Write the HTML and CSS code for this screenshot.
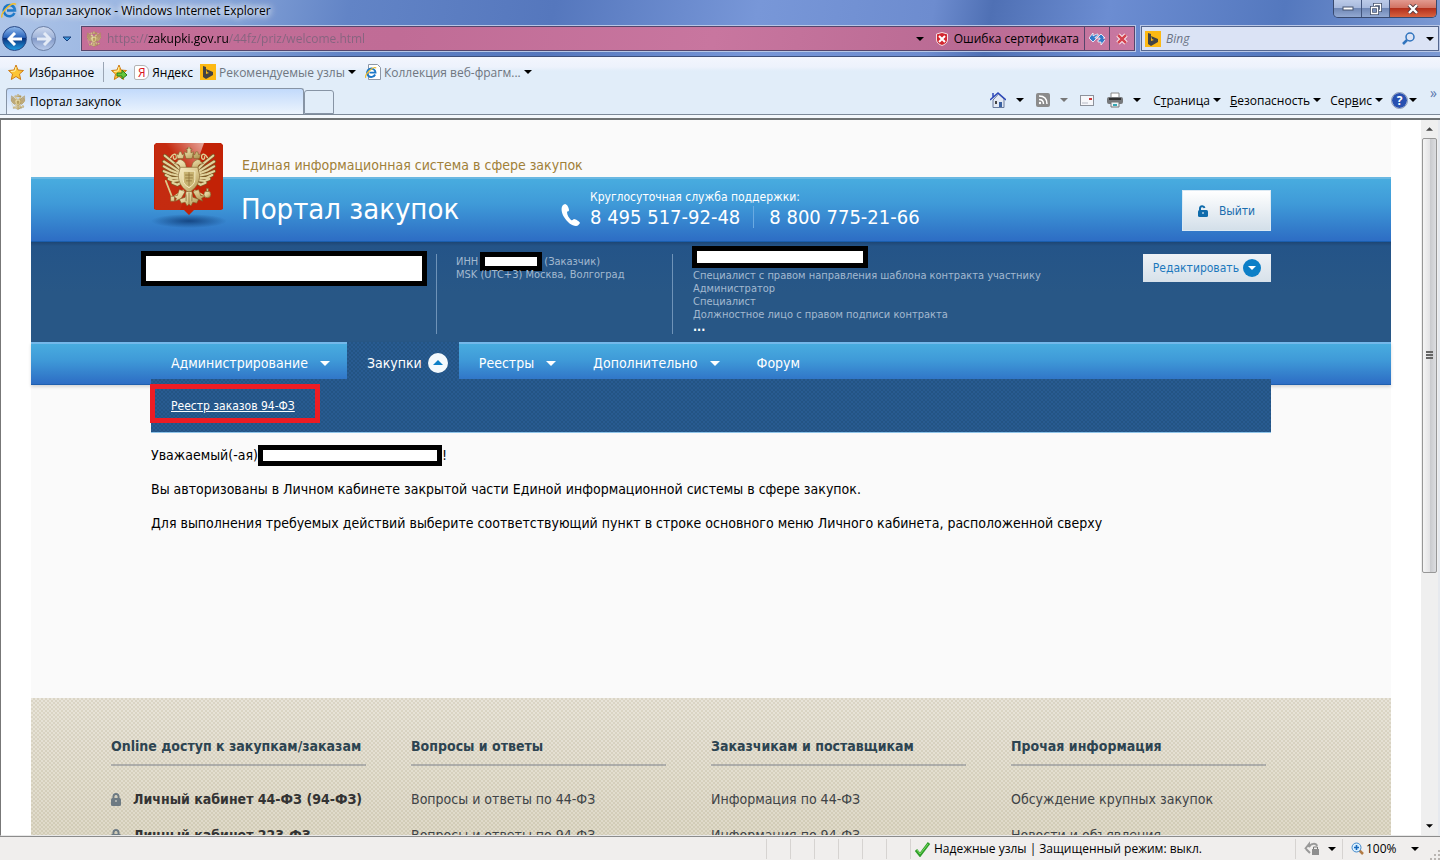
FILE: index.html
```html
<!DOCTYPE html>
<html lang="ru">
<head>
    <meta charset="UTF-8">
    <meta name="viewport" content="width=device-width, initial-scale=1.0">
    <title>Портал закупок</title>
    <link rel="stylesheet" href="styles.css">
</head>
<body>
    <!-- общие значки -->
    <svg class="defs" width="0" height="0" aria-hidden="true">
        <linearGradient id="gold" x1="0" y1="0" x2="1" y2="1">
            <stop offset="0" stop-color="#f6ecc4"/>
            <stop offset="0.5" stop-color="#dccb92"/>
            <stop offset="1" stop-color="#a98d48"/>
        </linearGradient>
        <symbol id="eagle" viewBox="0 0 54 62">
            <g fill="none" stroke-linecap="round">
                <path d="M19 24 12 17 2 9M18 26 9 20 1 15M18 28 8 24 1 20M18 30 8 28 1 25M18 32 9 32 3 29M19 34 11 35 6 33M20 36 15 39 10 37M35 24 42 17 52 9M36 26 45 20 53 15M36 28 46 24 53 20M36 30 46 28 53 25M36 32 45 32 51 29M35 34 43 35 48 33M34 36 39 39 44 37" stroke="#7d5c26" stroke-width="3.6"/>
                <path d="M19 24 12 17 2 9M18 26 9 20 1 15M18 28 8 24 1 20M18 30 8 28 1 25M18 32 9 32 3 29M19 34 11 35 6 33M20 36 15 39 10 37M35 24 42 17 52 9M36 26 45 20 53 15M36 28 46 24 53 20M36 30 46 28 53 25M36 32 45 32 51 29M35 34 43 35 48 33M34 36 39 39 44 37" stroke="#e2d29c" stroke-width="2.2"/>
                <path d="M8 11c2-4 6-5 6-1s-4 3-3 0M46 11c-2-4-6-5-6-1s4 3 3 0" stroke="#dfcd93" stroke-width="1.4"/>
                <path d="M3 35l7 18M12 51l9-6M33 45l9 5" stroke="#dcc98a" stroke-width="1.8"/>
            </g>
            <g fill="url(#gold)" stroke="#7d5c26" stroke-width="0.6">
                <path d="M24 25c1-6-1-11-6-12-2 0-3 1-3 2l-3 2 4 1c2 1 2 4 1 8zM30 25c-1-6 1-11 6-12 2 0 3 1 3 2l3 2-4 1c-2 1-2 4-1 8z"/>
                <path d="M18 21h18l2 8c0 8-4 14-11 18-7-4-11-10-11-18z"/>
                <path d="M23 9l-1-4 3 1V3h-1V2h2V0h2v2h2v1h-1v3l3-1-1 4-1 3h-6zM15 12l-1-5 2 1 1-3h2l1 3 2-1-1 5zM32 12l-1-5 2 1 1-3h2l1 3 2-1-1 5z"/>
                <path d="M24 46h6l1 6 6 2-2 4-4-1-2 4-2-2-2 2-2-4-4 1-2-4 6-2z"/>
                <path d="M17 44l-2 6-5 1 4 2-1 3 6-3 4-7zM37 44l2 6 5 1-4 2 1 3-6-3-4-7z"/>
                <circle cx="46" cy="49" r="3.5"/>
                <path d="M45 43h2v3h-2zM8 51h4v5H8z"/>
            </g>
            <path d="M21 25h12v9c0 4-3 6-6 8-3-2-6-4-6-8z" fill="#c8b372" stroke="#f6ebc2"/>
            <path d="M23 29h8M23 32h8M24 35h6M27 26v14M27 47v12M24 49v7M30 49v7" fill="none" stroke="#8c7138" stroke-width="0.8"/>
        </symbol>
        <symbol id="ie" viewBox="0 0 16 16">
            <path d="M13.5 10A5.6 5.6 0 1 1 14 7.500H6" fill="none" stroke="#1d78c8" stroke-width="2.600"/>
            <path d="M1 14.500C-.8 10 11-2 15 1.500" fill="none" stroke="#f0bd2c" stroke-width="1.500"/>
        </symbol>
        <symbol id="bing" viewBox="0 0 16 16">
            <path d="M0 0h16v16H0z" fill="#fdb913"/>
            <path d="M3 2l3 1v7l3-1-2-1-1-3 7 3v3l-7 4-3-2z" fill="#434343"/>
        </symbol>
        <symbol id="down" viewBox="0 0 8 4">
            <path d="M0 0h8L4 4z" fill="currentColor"/>
        </symbol>
        <symbol id="star" viewBox="0 0 16 16">
            <path d="M8 1l2 5 5.500.5-4 3.500 1.200 5.500L8 12.500 3.300 15.500 4.500 10 .5 6.500 6 6z" fill="#fcc534" stroke="#cf7d16"/>
            <path d="M8 3L7 7l-4 .5" fill="none" stroke="#fff0a8"/>
        </symbol>
        <symbol id="lock" viewBox="0 0 10 13">
            <path d="M2.500 6V3.500a2.500 2.500 0 0 1 5 0V6" fill="none" stroke="#6d7a83" stroke-width="2"/>
            <rect y="5" width="10" height="8" rx="1.500" fill="#6d7a83"/>
            <path d="M4 8h2" stroke="#e6e2d6"/>
        </symbol>
    </svg>

    <header class="browser">
        <div class="titlebar">
            <svg class="i16"><use href="#ie"/></svg>
            <span class="window-title">Портал закупок - Windows Internet Explorer</span>
            <div class="window-buttons">
                <button type="button" aria-label="Свернуть"><svg width="12" height="5"><rect x="1" y="1" width="10" height="3" fill="#fff" stroke="#45536e"/></svg></button>
                <button type="button" aria-label="Развернуть"><svg width="12" height="12" fill="none" stroke="#45536e" stroke-width="3"><path d="M4.500 3V1.500h6v6H9M1.500 4.500h6v6h-6z"/><path d="M4.500 3V1.500h6v6H9M1.500 4.500h6v6h-6z" stroke="#fff" stroke-width="1.300"/></svg></button>
                <button type="button" class="close" aria-label="Закрыть"><svg width="12" height="10"><path d="M2 1l8 8M10 1L2 9" stroke="#53383f" stroke-width="4"/><path d="M2 1l8 8M10 1L2 9" stroke="#fff" stroke-width="2.400"/></svg></button>
            </div>
        </div>

        <div class="address-row">
            <div class="history">
                <button type="button" class="round back" aria-label="Назад"><svg width="16" height="14"><path d="M15 7H3M8 1L2 7l6 6" fill="none" stroke="#fff" stroke-width="3"/></svg></button>
                <button type="button" class="round forward" aria-label="Вперед"><svg width="16" height="14"><path d="M1 7h12M8 1l6 6-6 6" fill="none" stroke="#e4ebf6" stroke-width="3"/></svg></button>
                <button type="button" class="recent" aria-label="Последние страницы"><svg width="10" height="6"><path d="M1 1h8L5 5z" fill="#3c97dc" stroke="#163f7d"/></svg></button>
            </div>
            <div class="address">
                <svg class="i16"><use href="#eagle"/></svg>
                <input class="url" type="text" aria-label="Адрес" value="https://zakupki.gov.ru/44fz/priz/welcome.html">
                <button type="button" class="address-drop" aria-label="Журнал"><svg class="arrow"><use href="#down"/></svg></button>
                <button type="button" class="cert"><svg width="12" height="14"><path d="M6 .5l5.500 1.500v6c0 3-3 4.500-5.500 5.500C3.500 12.500.5 11 .5 8V2z" fill="#d22630" stroke="#f4dfe2"/><path d="M3 4l6 6M9 4l-6 6" stroke="#fff" stroke-width="2"/></svg>Ошибка сертификата</button>
                <button type="button" class="address-button" aria-label="Обновить"><svg width="16" height="14" stroke="#fff" stroke-width=".8" fill="#3279c8"><path d="M0 6l4-5v3c3-2 5-2 5-2v2C7 4 6 5 6 6h2l-4 4zM16 8l-4 5v-3H9V8c2 0 2-1 2-2H8l4-4 4 4h-2"/></svg></button>
                <button type="button" class="address-button" aria-label="Остановить"><svg width="12" height="12"><path d="M2 2l8 8M10 2l-8 8" stroke="#fff" stroke-width="4.500"/><path d="M2 2l8 8M10 2l-8 8" stroke="#d4424f" stroke-width="2.500"/></svg></button>
            </div>
            <div class="search">
                <svg class="i16"><use href="#bing"/></svg>
                <input type="text" aria-label="Поиск" placeholder="Bing">
                <button type="button" aria-label="Найти"><svg width="13" height="13" fill="none" stroke="#2f73bd"><circle cx="8" cy="5" r="4" stroke-width="1.500"/><path d="M5 8l-4 4" stroke-width="2.500"/></svg></button>
                <button type="button" aria-label="Выбор поиска"><svg class="arrow"><use href="#down"/></svg></button>
            </div>
        </div>

        <div class="toolbars">
            <div class="favorites">
                <button type="button" class="fav-main"><svg class="i16"><use href="#star"/></svg>Избранное</button>
                <button type="button" class="fav-add" aria-label="Добавить"><svg class="i16"><use href="#star"/><path d="M6 9h5V6l5 5-5 4v-3H6z" fill="#66c63c" stroke="#2a7f1b"/></svg></button>
                <a class="fav" href="#"><span class="yandex">Я</span>Яндекс</a>
                <button type="button" class="fav dim"><svg class="i16"><use href="#bing"/></svg>Рекомендуемые узлы<svg class="arrow"><use href="#down"/></svg></button>
                <button type="button" class="fav dim"><svg class="i16"><path d="M3.500.5h9l3 3v12h-12z" fill="#fff" stroke="#8d97a6"/><use href="#ie" y="3" width="12" height="12"/></svg>Коллекция веб-фрагм...<svg class="arrow"><use href="#down"/></svg></button>
            </div>
            <div class="tab-row">
                <a class="tab" href="#"><svg class="i16"><use href="#eagle"/></svg>Портал закупок</a>
                <button type="button" class="new-tab" aria-label="Новая вкладка"></button>
                <div class="commands">
                    <button type="button" class="wide" aria-label="Домой"><svg class="i16"><path d="M3 8v7.500h11V7L8.500 2z" fill="#e3e9f3" stroke="#6a7b9d"/><path d="M0 8l8-7 8 7M3 5V1" fill="none" stroke="#2c47b8" stroke-width="1.500"/><path d="M9 10h3v5H9z" fill="#3c62a2"/><path d="M5 9h2v3H5z" fill="#444"/></svg><svg class="arrow"><use href="#down"/></svg></button>
                    <button type="button" class="wide grey" aria-label="Веб-каналы"><svg width="14" height="14"><rect width="14" height="14" rx="2" fill="#8b8b8b"/><path d="M3 3c5 0 8 3 8 8M3 6.500c3 0 4.500 2 4.500 4.500" fill="none" stroke="#fff" stroke-width="1.500"/><circle cx="4" cy="10" r="1.200" fill="#fff"/></svg><svg class="arrow"><use href="#down"/></svg></button>
                    <button type="button" aria-label="Почта"><svg width="14" height="11"><rect x=".5" y=".5" width="13" height="10" fill="#f6f7fa" stroke="#8d929b"/><path d="M9 3h3v2H9z" fill="#cb3a3a"/><path d="M2 8h6" stroke="#b5bac5"/></svg></button>
                    <button type="button" class="wide" aria-label="Печать"><svg class="i16"><path d="M4 1h8v6H4z" fill="#fff" stroke="#8a8a8a"/><rect y="5" width="16" height="7" rx="2" fill="#77797c"/><path d="M2 7h12" stroke="#333" stroke-width="2"/><path d="M4 10h8v5H4z" fill="#eef5f7" stroke="#777"/><path d="M6 13h4" stroke="#36a7b5" stroke-width="2"/></svg><svg class="arrow"><use href="#down"/></svg></button>
                    <button type="button" class="cmd"><span>С<u>т</u>раница</span><svg class="arrow"><use href="#down"/></svg></button>
                    <button type="button" class="cmd"><span><u>Б</u>езопасность</span><svg class="arrow"><use href="#down"/></svg></button>
                    <button type="button" class="cmd"><span>Сер<u>в</u>ис</span><svg class="arrow"><use href="#down"/></svg></button>
                    <button type="button" class="help"><span class="help-icon">?</span><svg class="arrow"><use href="#down"/></svg></button>
                    <button type="button" class="more">»</button>
                </div>
            </div>
        </div>
    </header>

    <div class="viewport">
        <main class="page">
            <div class="slogan">Единая информационная система в сфере закупок</div>
            <div class="band">
                <svg class="emblem" width="84" height="86" viewBox="0 0 84 86">
                    <defs>
                        <radialGradient id="shade"><stop offset="0" stop-color="#12407c" stop-opacity=".9"/><stop offset="1" stop-color="#12407c" stop-opacity="0"/></radialGradient>
                        <linearGradient id="shine" x1="1" y1="0" x2="0" y2="1"><stop offset="0" stop-color="#fff" stop-opacity=".6"/><stop offset=".4" stop-color="#fff" stop-opacity=".04"/></linearGradient>
                    </defs>
                    <ellipse cx="42" cy="78" rx="38" ry="7" fill="url(#shade)"/>
                    <path d="M9 0h65l2 2v64l-2 1H47l-5 5-5-5H9l-2-1V2z" fill="#c22206"/>
                    <path d="M8 0h49L33 67H8z" fill="url(#shine)"/>
                    <use href="#eagle" x="15" y="4" width="54" height="60"/>
                </svg>
                <h1>Портал закупок</h1>
                <svg class="phone-icon" width="20" height="23" viewBox="0 0 20 23"><path d="M2 1C0 3 0 8 3 13c3 5 8 9 12 9 2 0 3-2 4-3 0-1-4-4-6-4-1 0-1 2-3 1-2-2-4-5-4-8 0-1 2 0 2-2C8 4 6 0 4 0z" fill="#fff"/></svg>
                <div class="support">
                    <div class="support-title">Круглосуточная служба поддержки:</div>
                    <div class="phones"><span>8 495 517-92-48</span><span>8 800 775-21-66</span></div>
                </div>
                <button type="button" class="logout"><svg width="11" height="12"><path d="M2 6V3.500C2 .5 6 .5 6.500 3" fill="none" stroke="#0f6bab" stroke-width="2"/><rect y="5" width="10" height="7" rx="1.500" fill="#0f6bab"/><path d="M4 8h2" stroke="#fff"/></svg>Выйти</button>
            </div>

            <div class="info">
                <div class="info-org"><div class="redacted org-box"></div></div>
                <div class="info-inn">
                    <div class="inn">ИНН <span class="redacted inn-box"></span> (Заказчик)</div>
                    <div>MSK (UTC+3) Москва, Волгоград</div>
                </div>
                <div class="info-user">
                    <div class="redacted user-box"></div>
                    <div>Специалист с правом направления шаблона контракта участнику</div>
                    <div>Администратор</div>
                    <div>Специалист</div>
                    <div>Должностное лицо с правом подписи контракта</div>
                    <div class="dots">...</div>
                </div>
                <button type="button" class="edit">Редактировать<svg width="18" height="18"><circle cx="9" cy="9" r="9" fill="#0c7fc7"/><path d="M5 7h8l-4 4z" fill="#fff"/></svg></button>
            </div>

            <nav class="menu">
                <a href="#">Администрирование<svg class="menu-arrow"><use href="#down"/></svg></a>
                <a href="#" class="active">Закупки<svg width="20" height="20"><circle cx="10" cy="10" r="10" fill="#f3f9fd"/><path d="M5 12h10l-5-5z" fill="#0c7fc7"/></svg></a>
                <a href="#">Реестры<svg class="menu-arrow"><use href="#down"/></svg></a>
                <a href="#">Дополнительно<svg class="menu-arrow"><use href="#down"/></svg></a>
                <a href="#">Форум</a>
                <div class="submenu"><a href="#">Реестр заказов 94-ФЗ</a><div class="highlight"></div></div>
            </nav>

            <section class="welcome">
                <p>Уважаемый(-ая) <span class="redacted name-box"></span>!</p>
                <p>Вы авторизованы в Личном кабинете закрытой части Единой информационной системы в сфере закупок.</p>
                <p>Для выполнения требуемых действий выберите соответствующий пункт в строке основного меню Личного кабинета, расположенной сверху</p>
            </section>

            <footer class="footer">
                <div class="footer-col">
                    <h2>Online доступ к закупкам/заказам</h2>
                    <a href="#" class="cabinet"><svg width="10" height="13"><use href="#lock"/></svg>Личный кабинет 44-ФЗ (94-ФЗ)</a>
                    <a href="#" class="cabinet"><svg width="10" height="13"><use href="#lock"/></svg>Личный кабинет 223-ФЗ</a>
                </div>
                <div class="footer-col">
                    <h2>Вопросы и ответы</h2>
                    <a href="#">Вопросы и ответы по 44-ФЗ</a>
                    <a href="#">Вопросы и ответы по 94-ФЗ</a>
                </div>
                <div class="footer-col">
                    <h2>Заказчикам и поставщикам</h2>
                    <a href="#">Информация по 44-ФЗ</a>
                    <a href="#">Информация по 94-ФЗ</a>
                </div>
                <div class="footer-col">
                    <h2>Прочая информация</h2>
                    <a href="#">Обсуждение крупных закупок</a>
                    <a href="#">Новости и объявления</a>
                </div>
            </footer>
        </main>

        <div class="scrollbar">
            <svg class="scroll-arrow" viewBox="0 0 8 4"><path d="M0 4h8L4 0z" fill="#444"/></svg>
            <div class="thumb"><i></i><i></i><i></i></div>
            <svg class="scroll-arrow"><use href="#down"/></svg>
        </div>
    </div>

    <div class="statusbar">
        <i class="cell"></i><i class="cell"></i><i class="cell"></i><i class="cell"></i><i class="cell"></i><i class="cell"></i>
        <div class="zone"><svg width="16" height="16"><path d="M1 9l4 5L14 2" fill="none" stroke="#2f9e2b" stroke-width="3"/><path d="M2 9l3 4L13 3" fill="none" stroke="#7bdd60"/></svg>Надежные узлы | Защищенный режим: выкл.</div>
        <button type="button" class="privacy" aria-label="Конфиденциальность"><svg width="16" height="15"><path d="M1 8l4-5v3c2-4 7-4 8-1M2 8l4 4" fill="none" stroke="#999" stroke-width="2"/><rect x="8" y="8" width="7" height="6" fill="#8e8e8e"/><path d="M9.500 8V6h4v2" fill="none" stroke="#777"/></svg><svg class="arrow"><use href="#down"/></svg></button>
        <button type="button" class="zoom"><svg width="13" height="13"><path d="M8 8l4 4" stroke="#b27b45" stroke-width="2.500"/><circle cx="5.500" cy="5.500" r="4.500" fill="#d9efff" stroke="#4489ca"/><path d="M5.500 3v5M3 5.500h5" stroke="#1668bd" stroke-width="1.600"/></svg>100%<svg class="arrow"><use href="#down"/></svg></button>
        <svg class="grip" width="10" height="10"><path d="M8 0h2v2H8zM8 4h2v2H8zM4 4h2v2H4zM8 8h2v2H8zM4 8h2v2H4zM0 8h2v2H0z" fill="#b9b5b2"/></svg>
    </div>
</body>
</html>
```
FILE: styles.css
```css
* {
    box-sizing: border-box;
}

body {
    margin: 0;
    height: 100vh;
    display: flex;
    flex-direction: column;
    overflow: hidden;
    background: #fff;
    color: #000;
    font-family: "Open Sans", "Noto Sans", sans-serif;
    font-size: 12px;
}

button {
    display: flex;
    align-items: center;
    padding: 0;
    border: 0;
    background: none;
    color: inherit;
    font: inherit;
    white-space: nowrap;
}

input {
    min-width: 0;
    padding: 0;
    border: 0;
    outline: 0;
    background: none;
    font: inherit;
}

a {
    color: inherit;
    text-decoration: none;
}

svg {
    flex: none;
}

.defs {
    position: absolute;
}

.i16 {
    width: 16px;
    height: 16px;
}

.arrow {
    width: 8px;
    height: 4px;
}

/* окно браузера */
.browser {
    flex: none;
    background: linear-gradient(100deg, #aec5e8 0, #93b0df 12%, #6284c6 24%, #5577bd 38%, #7897d8 52%, #6d8ccf 64%, #4f70b4 68%, #6c8dd2 76%, #5478be 88%, #7f9cd5 100%);
}

.titlebar {
    display: flex;
    align-items: flex-start;
    gap: 3px;
    height: 26px;
    padding: 0 3px 0 1px;
}

.titlebar > .i16 {
    margin-top: 3px;
}

.window-title {
    padding: 2px 6px 2px 0;
    line-height: 18px;
    text-shadow: 0 0 6px #fff, 0 0 8px #fff, 0 0 10px #fff;
}

.window-buttons {
    display: flex;
    margin-left: auto;
    height: 18px;
    border: 1px solid #38496e;
    border-top: 0;
    border-radius: 0 0 5px 5px;
    overflow: hidden;
}

.window-buttons button {
    width: 28px;
    justify-content: center;
    border-right: 1px solid #42557d;
    background: linear-gradient(#bccbe8, #a7b9dd 45%, #7088b6 50%, #93a9d2);
}

.window-buttons .close {
    width: 46px;
    border-right: 0;
    background: linear-gradient(#e29a90, #d27364 45%, #b4301c 50%, #d8623f);
}

.address-row {
    display: flex;
    height: 30px;
    padding: 0 1px 5px 2px;
}

.history {
    display: flex;
    align-items: center;
    gap: 4px;
    width: 79px;
}

.round {
    flex: none;
    justify-content: center;
    width: 25px;
    height: 25px;
    border: 1px solid #274886;
    border-radius: 50%;
    background: linear-gradient(#8eb7ea, #2b66bd 45%, #0a337f 50%, #1f9be0);
}

.forward {
    border-color: #6b7fa5;
    background: linear-gradient(#cdd9ee, #a1b5da 45%, #8299c8 50%, #b9cbea);
}

.recent {
    margin-left: 2px;
}

.address {
    flex: 1;
    display: flex;
    align-items: center;
    gap: 5px;
    margin-right: 6px;
    padding-left: 4px;
    border: 1px solid #55466b;
    outline: 1px solid #b9c7e6;
    background: linear-gradient(100deg, #c56e98, #c06c96 30%, #c8769f 60%, #b96a93 84%, #c979a2);
}

/* домен в адресе темнее остальной строки */
.url {
    flex: 1;
    color: transparent;
    background: linear-gradient(90deg, #85647f 41px, #000 41px, #000 121px, #85647f 121px);
    -webkit-background-clip: text;
    background-clip: text;
}

.address-drop {
    margin-right: 7px;
}

.cert {
    gap: 6px;
}

.address-button {
    align-self: stretch;
    justify-content: center;
    width: 25px;
    margin-right: -5px;
    border-left: 1px solid #55466b;
}

.address-button:last-child {
    margin-right: 0;
}

.search {
    display: flex;
    align-items: center;
    gap: 5px;
    width: 298px;
    padding: 0 4px 0 3px;
    border: 1px solid #55678f;
    outline: 1px solid #b9c7e6;
    background: #dbe3f5;
}

.search input {
    flex: 1;
    font-style: italic;
}

.search input::placeholder {
    color: #6b7385;
    opacity: 1;
}

.search button + button {
    margin-left: 6px;
}

.toolbars {
    border-top: 1px solid #3c4f7c;
    border-bottom: 2px solid #6f7375;
    background: linear-gradient(#f3f6fd, #edf2fc 10px, #e1edf9 14px);
}

.favorites {
    display: flex;
    align-items: center;
    height: 30px;
    padding-left: 8px;
}

.fav-main {
    gap: 5px;
    height: 20px;
    padding-right: 9px;
    border-right: 1px solid #9aa5b4;
}

.fav-add {
    margin: 0 7px;
}

.fav {
    display: flex;
    align-items: center;
    gap: 3px;
    margin-right: 7px;
}

.fav .arrow,
.cmd .arrow {
    color: #000;
}

.dim {
    margin-right: 9px;
    color: #6f7680;
}

.yandex {
    width: 15px;
    height: 15px;
    border: 1px solid #b3b3b3;
    border-radius: 2px 6px 6px 2px;
    background: #fff;
    color: #d8141c;
    line-height: 13px;
    text-align: center;
}

.tab-row {
    display: flex;
    align-items: flex-end;
    height: 31px;
    padding: 0 3px 4px 6px;
    background: linear-gradient(#7d8a99, #7d8a99) 0 27px / 100% 1px no-repeat, linear-gradient(#f4f8fc, #f4f8fc) 0 28px / 100% 3px no-repeat;
}

.tab {
    display: flex;
    align-items: center;
    gap: 4px;
    width: 298px;
    height: 26px;
    padding-left: 3px;
    border: 1px solid #8794a5;
    border-bottom: 0;
    border-radius: 3px 3px 0 0;
    background: linear-gradient(#c2dafb, #ecf4fd);
}

.new-tab {
    width: 30px;
    height: 24px;
    border: 1px solid #8794a5;
    border-radius: 3px 3px 0 0;
}

.commands {
    display: flex;
    align-items: center;
    height: 28px;
    margin-left: auto;
}

.commands button {
    margin-right: 13px;
}

.commands .wide {
    gap: 10px;
    margin-right: 12px;
}

.commands .cmd {
    gap: 3px;
    margin-right: 9px;
}

.commands .help {
    gap: 2px;
    margin-right: 13px;
}

.commands .grey {
    color: #777;
}

.help-icon {
    width: 15px;
    height: 15px;
    border-radius: 50%;
    outline: 1px solid #8997b4;
    background: #2850b0;
    color: #fff;
    font-weight: bold;
    line-height: 15px;
    text-align: center;
}

.commands .more {
    align-self: flex-start;
    margin: 0;
    color: #5a76ad;
    font-size: 14px;
    line-height: 14px;
}

/* область страницы */
.viewport {
    flex: 1;
    min-height: 0;
    display: flex;
    overflow: hidden;
    border-left: 1px solid #777;
    border-right: 2px solid #e6e9ee;
    border-bottom: 1px solid #e8e8e8;
}

.page {
    flex: 1;
    align-self: flex-start;
    margin: 0 30px;
    background: #fafafa;
    font-family: "DejaVu Sans Condensed", "Noto Sans", sans-serif;
}

.slogan {
    height: 57px;
    padding: 36px 0 0 211px;
    color: #a08038;
    font-size: 14px;
    line-height: 18px;
}

.band {
    position: relative;
    display: flex;
    height: 65px;
    padding: 0 120px 0 210px;
    border-top: 2px solid #6ab8e2;
    border-bottom: 1px solid #1a5eae;
    background: linear-gradient(#48acdf, #3f9ad8 40%, #2d6dc4);
    color: #fff;
}

/* герб выступает над синей полосой */
.emblem {
    position: absolute;
    left: 116px;
    top: -36px;
}

.band h1 {
    width: 320px;
    margin: 0;
    font-size: 29px;
    font-weight: normal;
    line-height: 60px;
}

.phone-icon {
    margin: 25px 9px 0 0;
}

.support-title {
    margin-top: 9px;
    line-height: 18px;
}

.phones {
    display: flex;
    font-size: 20px;
    line-height: 22px;
}

.phones span + span {
    margin-left: 13px;
    padding-left: 15px;
    border-left: 1px solid #6aaae2;
}

.logout {
    justify-content: center;
    gap: 10px;
    width: 89px;
    height: 41px;
    margin: 11px 0 0 auto;
    border: 1px solid #dceaf4;
    background: linear-gradient(#fff, #d3dfe9);
    color: #1b6dae;
}

.info {
    display: flex;
    align-items: flex-start;
    height: 100px;
    padding: 12px 120px 0;
    background: linear-gradient(#1d4674, #245488 4px, #285786 50px);
    color: #a3b9d0;
    font-size: 11px;
    line-height: 13px;
}

.redacted {
    display: inline-block;
    border: 5px solid #000;
    background: #fff;
}

.info-org {
    width: 286px;
    height: 80px;
    border-right: 1px solid #6f93b8;
}

.org-box {
    width: 286px;
    height: 35px;
    margin: -3px 0 0 -10px;
}

.info-inn {
    width: 236px;
    height: 80px;
    padding-left: 19px;
    border-right: 1px solid #6f93b8;
}

.inn {
    display: flex;
    align-items: center;
    gap: 2px;
    height: 14px;
}

.inn-box {
    width: 62px;
    height: 19px;
}

.info-user {
    flex: 1;
    padding-left: 20px;
}

.user-box {
    display: block;
    width: 176px;
    height: 22px;
    margin: -8px 0 1px -1px;
}

.dots {
    color: #fff;
    font-size: 12px;
    font-weight: bold;
}

.edit {
    gap: 4px;
    height: 28px;
    padding: 0 10px;
    background: linear-gradient(#eef2f6, #d7e1ea);
    color: #1b78bd;
    font-size: 12px;
}

.menu {
    position: relative;
    display: flex;
    height: 43px;
    padding-left: 120px;
    border-top: 2px solid #74b8ea;
    border-bottom: 1px solid #1f5fae;
    background: linear-gradient(#48acdf, #3f9ad8 40%, #2d6dc4);
    box-shadow: 0 2px 3px rgba(0, 0, 0, 0.15);
    color: #fff;
    font-size: 14px;
}

.menu > a {
    display: flex;
    align-items: center;
    gap: 12px;
    height: 38px;
    padding: 0 17px 0 20px;
}

.menu-arrow {
    width: 10px;
    height: 5px;
}

.menu > .active {
    gap: 6px;
    margin-top: -2px;
    padding-top: 2px;
    height: 40px;
    padding-right: 11px;
}

.menu > .active,
.submenu {
    background: repeating-conic-gradient(#285b91 0 25%, #235484 0 50%) 0 0 / 4px 4px;
}

.submenu {
    position: absolute;
    left: 120px;
    right: 120px;
    top: 35px;
    height: 54px;
    padding: 17px 20px;
    border-bottom: 1px solid #8fc4e8;
    font-size: 12px;
    line-height: 20px;
}

.submenu a {
    text-decoration: underline;
}

/* красная рамка вокруг пункта меню */
.highlight {
    position: absolute;
    left: -1px;
    top: 5px;
    width: 170px;
    height: 39px;
    border: 5px solid #ed1c24;
}

.welcome {
    min-height: 313px;
    padding: 53px 120px 0;
    font-size: 14px;
}

.welcome p {
    display: flex;
    align-items: center;
    height: 34px;
    margin: 0;
    white-space: nowrap;
}

.name-box {
    width: 184px;
    height: 21px;
}

.footer {
    display: grid;
    grid-template-columns: repeat(4, 1fr);
    height: 200px;
    padding: 36px 80px 0;
    background: repeating-conic-gradient(rgba(180, 172, 146, 0.2) 0 25%, rgba(255, 255, 255, 0.15) 0 50%) 0 0 / 4px 4px, linear-gradient(#e4dfd2, #d9d3bf 140px);
    color: #3e4346;
    font-size: 14px;
}

.footer-col {
    padding-right: 45px;
    white-space: nowrap;
}

.footer h2 {
    height: 32px;
    margin: 0 0 15px;
    border-bottom: 2px solid #acaca9;
    color: #2d4451;
    font-size: 14px;
    line-height: 24px;
}

.footer a {
    display: flex;
    align-items: center;
    gap: 12px;
    height: 36px;
}

.footer .cabinet {
    color: #333;
    font-weight: bold;
}

.scrollbar {
    display: flex;
    flex-direction: column;
    align-items: center;
    width: 17px;
    padding: 7px 0;
    background: #efefef;
}

.scroll-arrow {
    width: 7px;
    height: 4px;
}

.thumb {
    display: flex;
    flex-direction: column;
    align-items: center;
    justify-content: center;
    gap: 1px;
    width: 15px;
    height: 62%;
    margin: 7px 0 auto;
    border: 1px solid #979797;
    border-radius: 2px;
    background: linear-gradient(90deg, #f5f5f5, #e4e4e6 50%, #c9cacd 55%, #dcdde0);
}

.thumb i {
    width: 7px;
    height: 2px;
    background: #666;
}

.statusbar {
    display: flex;
    align-items: center;
    justify-content: flex-end;
    height: 24px;
    border-top: 1px solid #8c8c8c;
    background: #f0eeed;
}

.cell {
    width: 24px;
    height: 20px;
    border-left: 1px solid #d6d3d1;
}

.zone {
    display: flex;
    align-items: center;
    gap: 3px;
    width: 385px;
    height: 20px;
    padding-left: 4px;
    border-left: 1px solid #d6d3d1;
}

.privacy {
    gap: 8px;
    width: 47px;
    height: 20px;
    padding-left: 8px;
    border-left: 1px solid #d6d3d1;
}

.zoom {
    gap: 2px;
    width: 88px;
    height: 20px;
    padding-left: 8px;
    border-left: 1px solid #d6d3d1;
}

.zoom .arrow {
    margin-left: 12px;
}

.grip {
    align-self: flex-end;
}
```
